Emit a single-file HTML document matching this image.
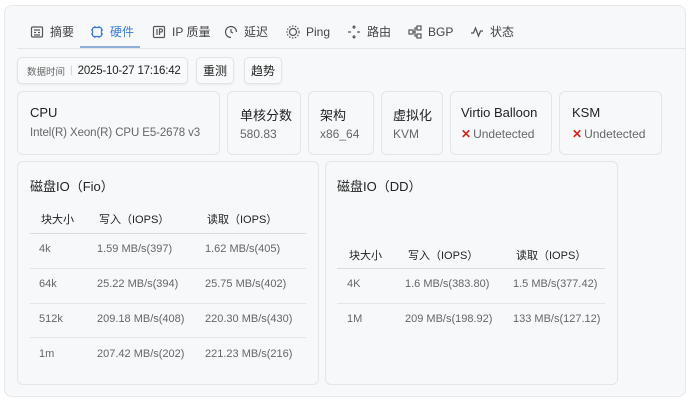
<!DOCTYPE html>
<html><head><meta charset="utf-8"><style>
*{box-sizing:border-box;margin:0;padding:0}
body{width:690px;height:404px;background:#fff;font-family:"Liberation Sans","Noto Sans CJK SC",sans-serif;color:#222;position:relative;overflow:hidden}
.outer{position:absolute;left:4px;top:5px;width:682px;height:392px;background:#f7f8fa;border:1px solid #e6e8eb;border-radius:8px}
.tab{position:absolute;top:24px;height:16px;line-height:16px;font-size:12px;color:#444;display:flex;align-items:center;gap:6px;white-space:nowrap}
.tab span{display:block;height:16px;line-height:16px}
.tab svg{width:14px;height:14px;flex:none}
.card{position:absolute;background:#f7f8fa;border:1px solid #e3e5e8;border-radius:6px}
.btn{position:absolute;top:57px;height:27px;border:1px solid #e1e3e6;border-radius:5px;background:#f9fafb;font-size:12px;display:flex;align-items:center;justify-content:center;box-shadow:0 1px 2px rgba(0,0,0,.06);white-space:nowrap;overflow:hidden}
.t{position:absolute;font-size:13px;color:#222;white-space:nowrap}
.v{position:absolute;font-size:12px;color:#666;white-space:nowrap}
.x{color:#d0281f;font-weight:bold;margin-right:2px}
.line{position:absolute;height:1px;background:#e3e5e8}
.cell{position:absolute;font-size:11px;color:#666;white-space:nowrap}
.hd{position:absolute;font-size:11px;color:#222;white-space:nowrap}
</style></head><body>
<div class="outer"></div>
<div class="tab" style="left:30px"><svg viewBox="0 0 14 14" fill="none" stroke="#555" stroke-width="1.2"><rect x="1.5" y="2" width="11" height="10" rx="1"/><path d="M4 5h6M4 7.5h2M8 7.5h2M4 10h6"/></svg><span>摘要</span></div>
<div class="tab" style="left:90px;color:#3a7bd5"><svg viewBox="0 0 14 14" fill="none" stroke="#3a7bd5" stroke-width="1.2"><rect x="2.5" y="2.5" width="9" height="9" rx="1.5"/><path d="M5 1v1.5M9 1v1.5M5 11.5V13M9 11.5V13M1 5h1.5M1 9h1.5M11.5 5H13M11.5 9H13"/></svg><span>硬件</span></div>
<div class="line" style="left:80px;top:46px;width:60px;height:2px;background:#8fb0d6"></div>
<div class="tab" style="left:152px"><svg viewBox="0 0 14 14" fill="none" stroke="#555" stroke-width="1.2"><rect x="1.5" y="1.5" width="11" height="11" rx="1"/><path d="M5 4v6M7.5 10V4h1.5a1.5 1.5 0 0 1 0 3H7.5"/></svg><span>IP 质量</span></div>
<div class="tab" style="left:224px"><svg viewBox="0 0 14 14" fill="none" stroke="#555" stroke-width="1.2"><path d="M12.5 7A5.5 5.5 0 1 0 7 12.5M7 4v3l2 1"/></svg><span>延迟</span></div>
<div class="tab" style="left:286px"><svg viewBox="0 0 14 14" fill="none" stroke="#555" stroke-width="1.2"><circle cx="7" cy="7" r="3.5"/><circle cx="7" cy="7" r="6" stroke-dasharray="1.5 1.5"/></svg><span>Ping</span></div>
<div class="tab" style="left:347px"><svg viewBox="0 0 14 14" fill="none" stroke="#555" stroke-width="1.2"><path d="M7 1v3M7 10v3M1 7h3M10 7h3M5.5 2.5L7 1l1.5 1.5M5.5 11.5L7 13l1.5-1.5"/></svg><span>路由</span></div>
<div class="tab" style="left:408px"><svg viewBox="0 0 14 14" fill="none" stroke="#555" stroke-width="1.2"><rect x="1" y="5" width="4" height="4"/><rect x="9" y="1" width="4" height="4"/><rect x="9" y="9" width="4" height="4"/><path d="M5 7h2V3h2M7 7v4h2"/></svg><span>BGP</span></div>
<div class="tab" style="left:470px"><svg viewBox="0 0 14 14" fill="none" stroke="#555" stroke-width="1.3"><path d="M1 8h2.5l2-5 3 8 2-5H13"/></svg><span>状态</span></div>
<div class="line" style="left:17px;top:48px;width:669px"></div>

<div class="btn" style="left:17px;width:171px;justify-content:flex-start;padding-left:9px"><span style="font-size:9.5px;color:#666">数据时间</span><span style="color:#ccc;margin:0 5px;font-size:10px">|</span><span style="font-size:11.5px;color:#222;letter-spacing:-0.2px">2025-10-27 17:16:42</span></div>
<div class="btn" style="left:196px;width:38px">重测</div>
<div class="btn" style="left:244px;width:38px">趋势</div>

<div class="card" style="left:17px;top:91px;width:203px;height:64px"></div>
<div class="card" style="left:227px;top:91px;width:74px;height:64px"></div>
<div class="card" style="left:308px;top:91px;width:66px;height:64px"></div>
<div class="card" style="left:381px;top:91px;width:62px;height:64px"></div>
<div class="card" style="left:450px;top:91px;width:102px;height:64px"></div>
<div class="card" style="left:559px;top:91px;width:103px;height:64px"></div>
<div class="t" style="left:30px;top:105px">CPU</div>
<div class="v" style="left:30px;top:127px;font-size:11.5px;letter-spacing:-0.1px">Intel(R) Xeon(R) CPU E5-2678 v3</div>
<div class="t" style="left:240px;top:105px">单核分数</div>
<div class="v" style="left:240px;top:127px">580.83</div>
<div class="t" style="left:320px;top:105px">架构</div>
<div class="v" style="left:320px;top:127px">x86_64</div>
<div class="t" style="left:393px;top:105px">虚拟化</div>
<div class="v" style="left:393px;top:127px">KVM</div>
<div class="t" style="left:461px;top:105px">Virtio Balloon</div>
<div class="v" style="left:461px;top:127px"><span class="x">✕</span>Undetected</div>
<div class="t" style="left:572px;top:105px">KSM</div>
<div class="v" style="left:572px;top:127px"><span class="x">✕</span>Undetected</div>

<div class="card" style="left:17px;top:161px;width:302px;height:224px"></div>
<div class="card" style="left:325px;top:161px;width:293px;height:224px"></div>
<div class="t" style="left:30px;top:176px">磁盘IO（Fio）</div>
<div class="t" style="left:337px;top:176px">磁盘IO（DD）</div>

<div class="hd" style="left:41px;top:211px">块大小</div>
<div class="hd" style="left:99px;top:211px">写入（IOPS）</div>
<div class="hd" style="left:207px;top:211px">读取（IOPS）</div>
<div class="line" style="left:30px;top:233px;width:276px;background:#d8dbdf"></div>
<div class="cell" style="left:39px;top:243px">4k</div><div class="cell" style="left:97px;top:243px">1.59 MB/s(397)</div><div class="cell" style="left:205px;top:243px">1.62 MB/s(405)</div>
<div class="line" style="left:30px;top:268px;width:276px"></div>
<div class="cell" style="left:39px;top:278px">64k</div><div class="cell" style="left:97px;top:278px">25.22 MB/s(394)</div><div class="cell" style="left:205px;top:278px">25.75 MB/s(402)</div>
<div class="line" style="left:30px;top:303px;width:276px"></div>
<div class="cell" style="left:39px;top:313px">512k</div><div class="cell" style="left:97px;top:313px">209.18 MB/s(408)</div><div class="cell" style="left:205px;top:313px">220.30 MB/s(430)</div>
<div class="line" style="left:30px;top:337px;width:276px"></div>
<div class="cell" style="left:39px;top:348px">1m</div><div class="cell" style="left:97px;top:348px">207.42 MB/s(202)</div><div class="cell" style="left:205px;top:348px">221.23 MB/s(216)</div>

<div class="hd" style="left:349px;top:247px">块大小</div>
<div class="hd" style="left:408px;top:247px">写入（IOPS）</div>
<div class="hd" style="left:516px;top:247px">读取（IOPS）</div>
<div class="line" style="left:337px;top:268px;width:268px;background:#d8dbdf"></div>
<div class="cell" style="left:347px;top:278px">4K</div><div class="cell" style="left:405px;top:278px">1.6 MB/s(383.80)</div><div class="cell" style="left:513px;top:278px">1.5 MB/s(377.42)</div>
<div class="line" style="left:337px;top:303px;width:268px"></div>
<div class="cell" style="left:347px;top:313px">1M</div><div class="cell" style="left:405px;top:313px">209 MB/s(198.92)</div><div class="cell" style="left:513px;top:313px">133 MB/s(127.12)</div>
</body></html>
